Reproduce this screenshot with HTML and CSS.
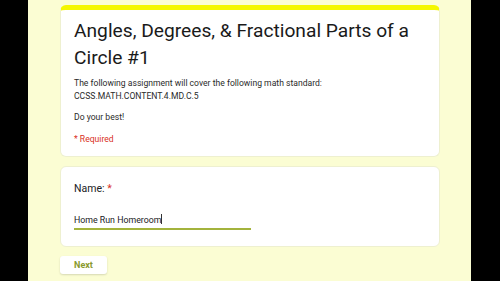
FILE: index.html
```html
<!DOCTYPE html>
<html>
<head>
<meta name="viewport" content="width=device-width, initial-scale=1">
<link rel="stylesheet" href="styles.css">
</head>
<body>

<div class="screen">
  <div class="form">
    <div class="card head">
      <h1 class="title">Angles, Degrees, &amp; Fractional Parts of a Circle #1</h1>
      <p class="desc">The following assignment will cover the following math standard:<br>CCSS.MATH.CONTENT.4.MD.C.5</p>
      <p class="desc">Do your best!</p>
      <p class="req">* Required</p>
    </div>

    <div class="card question">
      <div class="label">Name: <span class="star">*</span></div>
      <div class="answer">Home Run Homeroom<span class="caret"></span></div>
    </div>

    <div class="btn">Next</div>
  </div>
</div>

</body>
</html>
```

FILE: styles.css
```css
body {
  margin: 0;
  background: #000;
  font-family: Roboto, "Liberation Sans", sans-serif;
  color: #202124;
}

* {
  box-sizing: border-box;
}

.screen {
  margin: 0 29px 0 28px;
  height: 281px;
  background: #fbfdd3;
  padding-top: 5px;
  overflow: hidden;
}

.form {
  margin-left: 32px;
  width: 380px;
}

.card {
  background: #fff;
  border-radius: 6px;
  border: 1px solid #eef0d0;
}

.head {
  border-top: 5px solid #f4f700;
  padding: 7px 13px 13px 13px;
  height: 152px;
}

.title {
  margin: 0;
  font-weight: 400;
  font-size: 19.2px;
  line-height: 27px;
  color: #1a1a1a;
}

.desc {
  margin: 6px 0 0 0;
  font-size: 8.6px;
  line-height: 12.5px;
  color: #2a2a2a;
}

.desc + .desc {
  margin-top: 9px;
}

.req {
  margin: 9px 0 0 0;
  font-size: 8.6px;
  line-height: 12px;
  color: #d93025;
}

.question {
  margin-top: 9px;
  height: 81px;
  padding: 15px 13px 0 13px;
}

.label {
  font-size: 10.5px;
  line-height: 14px;
}

.star {
  color: #d93025;
}

.answer {
  margin-top: 18px;
  width: 177px;
  font-size: 8.8px;
  line-height: 12px;
  padding-bottom: 2px;
  border-bottom: 2px solid #a3b33c;
}

.caret {
  display: inline-block;
  width: 1px;
  height: 10px;
  background: #333;
  vertical-align: -1px;
}

.btn {
  margin-top: 9px;
  width: 47px;
  height: 18px;
  background: #fff;
  border-radius: 3px;
  box-shadow: 0 1px 2px rgba(0, 0, 0, 0.15);
  color: #8a9a2e;
  font-size: 9px;
  font-weight: 700;
  text-align: center;
  line-height: 18px;
}
```
